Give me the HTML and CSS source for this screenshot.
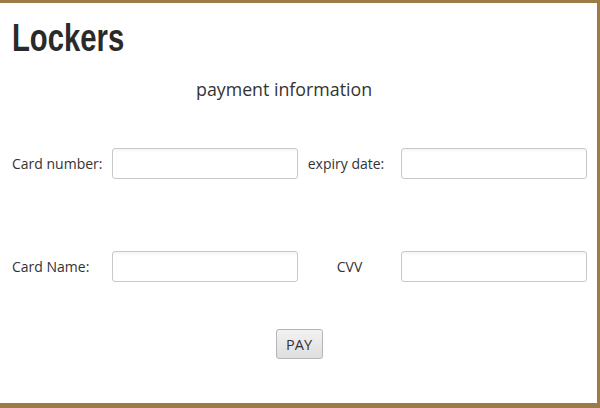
FILE: index.html
```html
<!DOCTYPE html>
<html>
<head>
<meta charset="utf-8">
<link rel="stylesheet" href="styles.css">
</head>
<body>
<div class="frame">
  <h1 class="title"><span class="title-text">Lockers</span></h1>
  <div class="subtitle">payment information</div>
  <div class="form-grid">
    <label class="lbl">Card number:</label>
    <input class="field" type="text">
    <label class="lbl lbl-center lbl-expiry">expiry date:</label>
    <input class="field" type="text">
    <label class="lbl">Card Name:</label>
    <input class="field" type="text">
    <label class="lbl lbl-center">CVV</label>
    <input class="field" type="text">
  </div>
  <div class="actions">
    <button class="pay-btn">PAY</button>
  </div>
</div>
</body>
</html>
```
FILE: styles.css
```css
html, body {
  margin: 0;
  padding: 0;
  background: #ffffff;
}
.frame {
  width: 600px;
  height: 408px;
  box-sizing: border-box;
  border-top: 3px solid #9c7b45;
  border-right: 3px solid #9c7b45;
  border-bottom: 5px solid #9c7b45;
  font-family: "Open Sans", "Noto Sans", sans-serif;
  color: #333333;
}
.title {
  margin: 16px 0 0 12px;
  font-family: "Liberation Sans", Arial, sans-serif;
  font-weight: bold;
  font-size: 38px;
  line-height: 38px;
  color: #2a2a2a;
}
.title-text {
  display: inline-block;
  transform: scaleX(0.77);
  transform-origin: left center;
}
.subtitle {
  margin: 20px 0 0 196px;
  font-size: 17.8px;
  line-height: 24px;
  color: #333333;
}
.form-grid {
  margin: 47px 0 0 12px;
  display: grid;
  grid-template-columns: 100px 186px 103px 186px;
  grid-auto-rows: 31px;
  row-gap: 72px;
  align-items: center;
}
.lbl {
  font-size: 14px;
  color: #333333;
}
.lbl-center {
  text-align: center;
}
.lbl-expiry {
  padding-right: 7px;
}
.field {
  box-sizing: border-box;
  width: 186px;
  height: 31px;
  margin: 0;
  border: 1px solid #c8c8c8;
  border-radius: 3px;
  background: linear-gradient(#f4f4f4, #ffffff 4px);
  padding: 0 6px;
  font-family: inherit;
}
.actions {
  display: flex;
  justify-content: center;
  margin-top: 47px;
}
.pay-btn {
  box-sizing: border-box;
  width: 47px;
  height: 30px;
  margin-left: 1px;
  border: 1px solid #b5b5b5;
  border-radius: 3px;
  background: linear-gradient(#f2f2f2, #dedede);
  font-family: "Open Sans", "Noto Sans", sans-serif;
  font-size: 14.5px;
  color: #333333;
  padding: 0;
}
```
